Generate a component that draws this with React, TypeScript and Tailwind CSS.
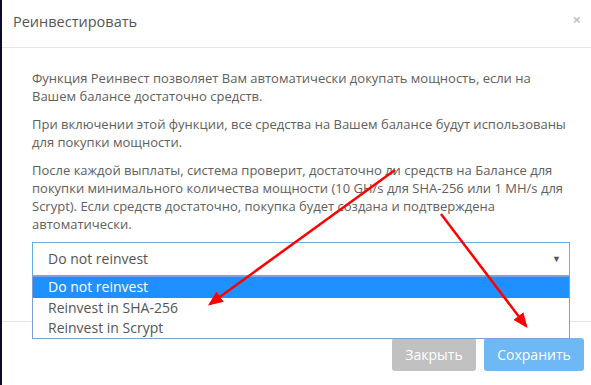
import React from "react";

export default function App() {
  const font = { fontFamily: '"Open Sans", "Noto Sans", sans-serif' };
  return (
    <div className="relative w-[591px] h-[385px] bg-white overflow-hidden flex" style={font}>
      <div className="w-[2px] h-full bg-[#0b0b2e] shrink-0" />
      <div className="flex-1 flex flex-col">
        {/* header */}
        <div className="h-[48px] border-b border-[#e5e5e5] flex items-center justify-between pl-[11px] pr-[10px]">
          <span className="text-[14.5px] text-[#555] leading-none -mt-[3px]">Реинвестировать</span>
          <span className="text-[15px] font-bold text-[#c4c4c4] leading-none -mt-[8px]">×</span>
        </div>
        {/* body */}
        <div className="relative pl-[30px] pr-[21px] pt-[21px] h-[274px] border-b border-[#e5e5e5] text-[13px] leading-[18px] text-[#606060]">
          <p>Функция Реинвест позволяет Вам автоматически докупать мощность, если на<br />Вашем балансе достаточно средств.</p>
          <p className="mt-[10px]">При включении этой функции, все средства на Вашем балансе будут использованы<br />для покупки мощности.</p>
          <p className="mt-[10px]">После каждой выплаты, система проверит, достаточно ли средств на Балансе для<br />покупки минимального количества мощности (10 GH/s для SHA-256 или 1 MH/s для<br />Scrypt). Если средств достаточно, покупка будет создана и подтверждена<br />автоматически.</p>
          <div className="relative mt-[9px] h-[34px] border border-[#66afe9] flex items-center justify-between pl-[15px] pr-[8px] text-[14px] text-[#555]">
            <span>Do not reinvest</span>
            <span className="text-[9px] text-[#555]">▼</span>
            <div className="absolute left-[-1px] right-[-1px] top-[33px] z-10 bg-white border border-[#7b9fd6] text-[14px] leading-[20px]">
              <div className="bg-[#1e90ff] text-white pl-[15px] h-[21px]">Do not reinvest</div>
              <div className="pl-[15px] text-[#555]">Reinvest in SHA-256</div>
              <div className="pl-[15px] text-[#555]">Reinvest in Scrypt</div>
            </div>
          </div>
        </div>
        {/* footer */}
        <div className="flex justify-end gap-[8px] pt-[16px] pr-[7px]">
          <button className="w-[84px] h-[33px] rounded-[3px] bg-[#c1c1c1] text-white text-[14px]">Закрыть</button>
          <button className="w-[100px] h-[33px] rounded-[3px] bg-[#6db8f5] text-white text-[14px]">Сохранить</button>
        </div>
      </div>
      <svg className="absolute inset-0 z-20 pointer-events-none" width="591" height="385">
        <defs>
          <marker id="ah" markerWidth="6" markerHeight="5" refX="5" refY="2.5" orient="auto" markerUnits="strokeWidth">
            <path d="M0,0 L6,2.5 L0,5 Z" fill="#ff0000" />
          </marker>
        </defs>
        <line x1="395" y1="170" x2="210" y2="304" stroke="#ff0000" strokeWidth="2.5" markerEnd="url(#ah)" />
        <line x1="441" y1="214" x2="526" y2="326" stroke="#ff0000" strokeWidth="2.5" markerEnd="url(#ah)" />
      </svg>
    </div>
  );
}
